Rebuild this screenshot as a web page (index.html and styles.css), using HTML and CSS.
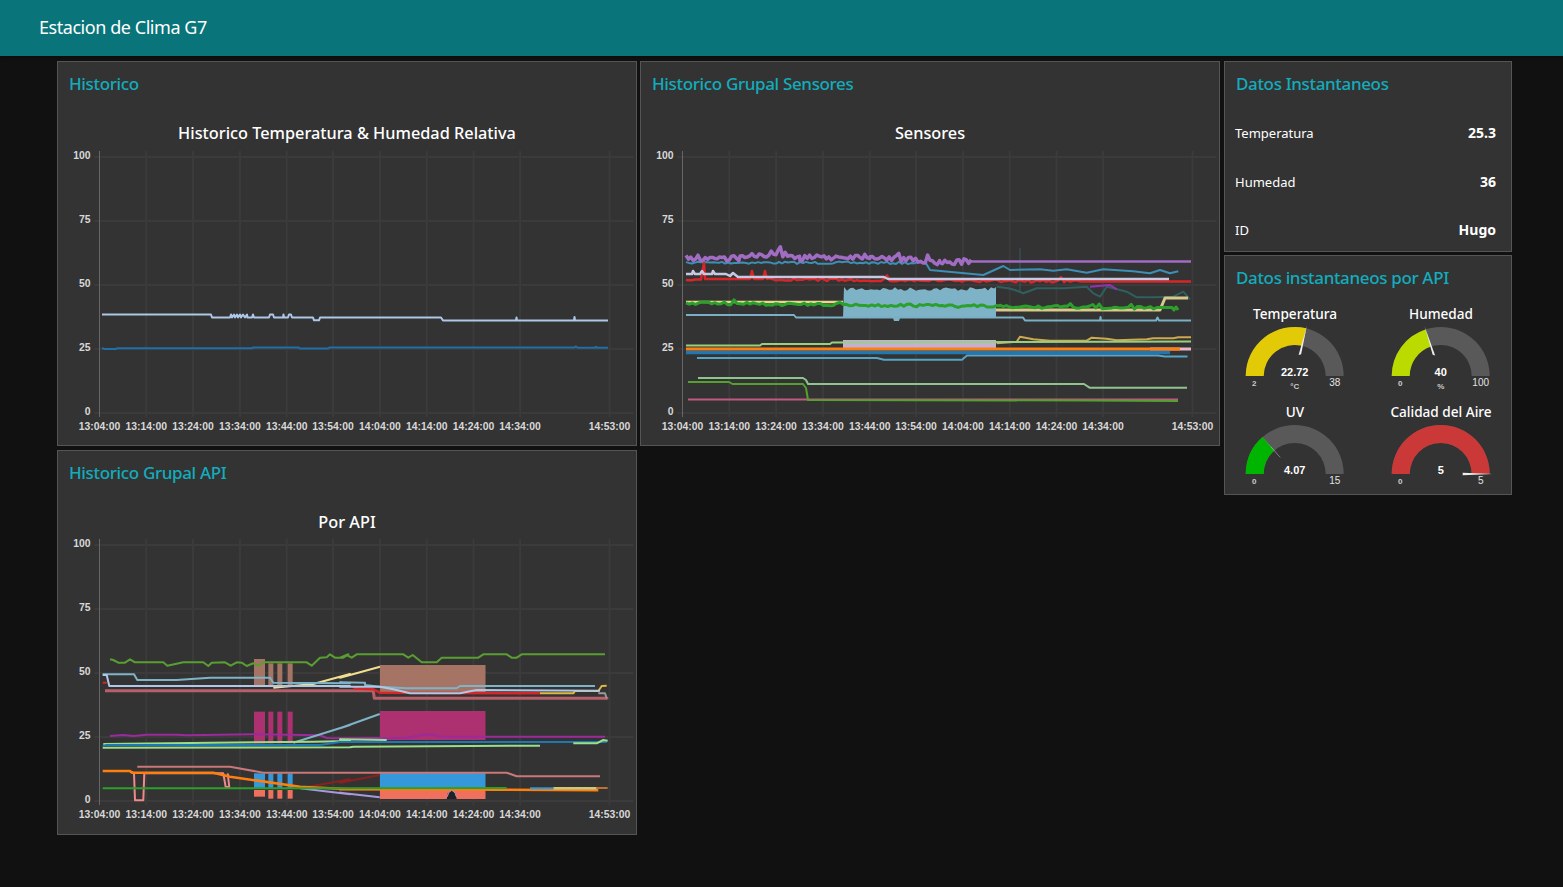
FILE: index.html
```html
<!DOCTYPE html>
<html lang="en">
<head>
    <meta charset="UTF-8">
    <meta name="viewport" content="width=device-width, initial-scale=1.0">
    <title>Estacion de Clima G7</title>
    <link rel="stylesheet" href="styles.css">
</head>
<body>

<header class="topbar">Estacion de Clima G7</header>

<main class="dashboard">
    <div class="column">
        <section class="card">
            <h2 class="card-title">Historico</h2>
            <div class="chart-title">Historico Temperatura &amp; Humedad Relativa</div>
            <svg id="chart_temp" class="chart" viewBox="58 145 578 300"></svg>
        </section>
        <section class="card">
            <h2 class="card-title">Historico Grupal API</h2>
            <div class="chart-title">Por API</div>
            <svg id="chart_api" class="chart" viewBox="58 534 578 300"></svg>
        </section>
    </div>

    <div class="column">
        <section class="card">
            <h2 class="card-title">Historico Grupal Sensores</h2>
            <div class="chart-title">Sensores</div>
            <svg id="chart_sensors" class="chart" viewBox="641 145 578 300"></svg>
        </section>
    </div>

    <div class="column column-side">
        <section class="card card-readings">
            <h2 class="card-title">Datos Instantaneos</h2>
            <div class="reading"><span>Temperatura</span><b>25.3</b></div>
            <div class="reading"><span>Humedad</span><b>36</b></div>
            <div class="reading"><span>ID</span><b>Hugo</b></div>
        </section>
        <section class="card card-gauges">
            <h2 class="card-title">Datos instantaneos por API</h2>
            <div class="gauge-grid">
                <div class="gauge">
                    <div class="gauge-title">Temperatura</div>
                    <svg class="gauge-svg" viewBox="0 0 140 78" data-value="22.72" data-min="2" data-max="38" data-unit="°C" data-color="#e2cb06"></svg>
                </div>
                <div class="gauge">
                    <div class="gauge-title">Humedad</div>
                    <svg class="gauge-svg" viewBox="0 0 140 78" data-value="40" data-min="0" data-max="100" data-unit="%" data-color="#bbdb00"></svg>
                </div>
                <div class="gauge">
                    <div class="gauge-title">UV</div>
                    <svg class="gauge-svg" viewBox="0 0 140 78" data-value="4.07" data-min="0" data-max="15" data-unit="" data-color="#00b500"></svg>
                </div>
                <div class="gauge">
                    <div class="gauge-title">Calidad del Aire</div>
                    <svg class="gauge-svg" viewBox="0 0 140 78" data-value="5" data-min="0" data-max="5" data-unit="" data-color="#ca3838"></svg>
                </div>
            </div>
        </section>
    </div>
</main>

<script src="app.js"></script>

</body>
</html>
```

FILE: styles.css
```css
/* page */
body {
    font-family: "Noto Sans", "Open Sans", sans-serif;
    background-color: #111;
    color: #fff;
    margin: 0;
    padding: 0;
    min-height: 100vh;
}

.topbar {
    height: 56px;
    line-height: 55px;
    padding-left: 39px;
    background-color: #097479;
    font-size: 18px;
    letter-spacing: -0.45px;
    box-shadow: 0 1px 3px rgba(0, 0, 0, 0.4);
}

/* columns */
.dashboard {
    display: flex;
    align-items: flex-start;
    gap: 3px;
    padding: 5px 0 0 57px;
}

.column {
    display: flex;
    flex-direction: column;
    gap: 4px;
    width: 580px;
}

.column-side {
    width: 288px;
    margin-left: 1px;
    gap: 3px;
}

/* cards */
.card {
    box-sizing: border-box;
    height: 385px;
    background-color: #333;
    border: 1px solid #555;
}

.card-readings {
    height: 191px;
}

.card-gauges {
    height: 240px;
}

.card-title {
    margin: 0;
    padding: 9px 11px 0;
    height: 47px;
    box-sizing: border-box;
    line-height: 25px;
    font-size: 17px;
    font-weight: 500;
    letter-spacing: -0.35px;
    color: #12acbc;
}

.chart-title {
    height: 24px;
    margin-top: 12px;
    line-height: 24px;
    text-align: center;
    font-size: 16.3px;
    font-weight: 500;
}

.chart {
    display: block;
    width: 578px;
    height: 300px;
}

.tick {
    font-family: "Liberation Sans", Arial, sans-serif;
    font-size: 10.4px;
    font-weight: bold;
    fill: #d8d8d8;
}

/* readings */
.reading {
    display: flex;
    justify-content: space-between;
    align-items: center;
    height: 48.5px;
    padding: 0 15px 0 10px;
    font-size: 13px;
}

.reading b {
    font-size: 14px;
    line-height: 16px;
}

/* gauges */
.gauge-grid {
    display: grid;
    grid-template-columns: 140px 140px;
    grid-auto-rows: 98px;
    column-gap: 6px;
}

.gauge-title {
    height: 20px;
    line-height: 22px;
    text-align: center;
    font-size: 13.6px;
    font-weight: 500;
}

.gauge-svg {
    display: block;
    width: 140px;
    height: 78px;
}

.gauge-value {
    font-family: "Liberation Sans", Arial, sans-serif;
    font-size: 11px;
    font-weight: bold;
    fill: #fff;
    text-anchor: middle;
}

.gauge-unit,
.gauge-min {
    font-family: "Liberation Sans", Arial, sans-serif;
    font-size: 8px;
    font-weight: bold;
    fill: #ccc;
    text-anchor: middle;
}

.gauge-max {
    font-family: "Liberation Sans", Arial, sans-serif;
    font-size: 10px;
    fill: #e4e4e4;
    text-anchor: middle;
}
```

FILE: app.js
```js
const NS = "http://www.w3.org/2000/svg";

function el(parent, name, attrs, text) {
    const node = document.createElementNS(NS, name);
    for (const key in attrs) node.setAttribute(key, attrs[key]);
    if (text !== undefined) node.textContent = text;
    parent.appendChild(node);
    return node;
}

// points read off at an offset and 3x scale -> page coordinates
function z(ox, oy, flat) {
    const out = [];
    for (let i = 0; i < flat.length; i += 2) out.push([ox + flat[i] / 3, oy + flat[i + 1] / 3]);
    return out;
}

function px(pts) {
    return pts.map(p => p[0].toFixed(1) + "," + p[1].toFixed(1)).join(" ");
}

let seed = 7;
function rnd() {
    seed = (seed * 16807) % 2147483647;
    return seed / 2147483647;
}

// step line through the points with seeded jitter
function noisy(pts, amp, step, spike) {
    const out = [];
    for (let i = 0; i < pts.length - 1; i++) {
        const a = pts[i], b = pts[i + 1];
        for (let x = a[0]; x < b[0]; x += step) {
            const y = a[1] + (b[1] - a[1]) * (x - a[0]) / (b[0] - a[0]);
            let d = (rnd() - 0.5) * 2 * amp;
            if (spike && rnd() < 0.06) d -= spike * rnd();
            out.push([x, y + d]);
        }
    }
    return out;
}

function drawAxes(svg, x0, dy, last) {
    const gridX = [0, 46.8, 93.6, 140.4, 187.2, 233.6, 280.4, 327.2, 374, 420.6, 510];
    const labels = ["13:04:00", "13:14:00", "13:24:00", "13:34:00", "13:44:00", "13:54:00", "14:04:00", "14:14:00", "14:24:00", "14:34:00", last];
    const values = [100, 75, 50, 25, 0];
    values.forEach((v, i) => {
        const y = 157 + i * 64 + dy;
        el(svg, "line", { x1: x0 - 5, x2: x0 + 534, y1: y, y2: y, stroke: "#3b3b3b", "stroke-width": 2 });
        el(svg, "text", { class: "tick", x: x0 - 9, y: y + 2, "text-anchor": "end" }, v);
    });
    gridX.forEach((g, i) => {
        const x = x0 + g;
        el(svg, "line", { x1: x, x2: x, y1: 151 + dy, y2: 417 + dy, stroke: i ? "#3b3b3b" : "#666", "stroke-width": i ? 2 : 1 });
        el(svg, "text", { class: "tick", x: x, y: 430 + dy, "text-anchor": "middle" }, labels[i]);
    });
}

function line(svg, color, width, pts) {
    el(svg, "polyline", { points: px(pts), fill: "none", stroke: color, "stroke-width": width, "stroke-linejoin": "round" });
}

function fill(svg, color, pts) {
    el(svg, "polygon", { points: px(pts), fill: color });
}

function rect(svg, color, x1, y1, x2, y2) {
    el(svg, "rect", { x: x1, y: y1, width: x2 - x1, height: y2 - y1, fill: color });
}

function drawTemp(svg) {
    drawAxes(svg, 99.5, 0, "14:53:00");
    line(svg, "#1f6fa8", 2, [[102, 347.8], [104, 349], [116, 349], [117, 348.3], [252, 348.3], [253, 347.6], [299, 347.6], [300, 348.6], [328, 348.6], [329, 347.6], [574, 347.6], [576, 346.5], [578, 347.8], [595, 347.8], [596, 346.8], [598, 347.8], [608, 347.8]]);
    line(svg, "#aec7e8", 2, [[102, 314.5], [211, 314.5], [212, 317.5], [230, 317.5], [231, 314.5], [232, 317.5], [234, 314.5], [235, 317.5], [237, 314.5], [238, 317.5], [240, 314.5], [241, 317.5], [243, 314.5], [245, 317.5], [247, 314.5], [247.5, 317.5], [252, 317.5], [253, 314.5], [254, 317.5], [269, 317.5], [270, 314.5], [273, 314.5], [274, 317.5], [283, 317.5], [283.5, 314.5], [284, 317.5], [288, 317.5], [289, 314.5], [291, 314.5], [292, 317.5], [313, 317.5], [314, 320.3], [319, 320.3], [320, 317.5], [441, 317.5], [443, 320.5], [516, 320.5], [516.5, 317.5], [517, 320.5], [574, 320.5], [574.5, 317], [575, 320.5], [608, 320.5]]);
}

function drawSensors(svg) {
    drawAxes(svg, 682.5, 0, "14:53:00");

    // block under the noisy lines
    const top = noisy([[844, 289], [996, 289]], 2, 3, 0).map(p => [p[0], p[1]]);
    fill(svg, "#7eb2c6", [[843, 318]].concat(top, [[996, 287], [996, 318], [900, 318], [899, 321], [894, 321], [893, 318]]));
    rect(svg, "#c5b0d5", 843, 340, 996, 348);
    line(svg, "#335f5f", 1, [[1020, 248], [1020, 292]]);

    line(svg, "#3d8fb5", 2, noisy([[686, 262.5], [928, 263]], 1.2, 3).concat(z(680, 240, [750, 90]), z(940, 240, [130, 105, 190, 78, 210, 90, 300, 88, 340, 92, 380, 88, 440, 98, 490, 88, 580, 94, 630, 100, 660, 90, 690, 100, 715, 94])));
    line(svg, "#a06cc4", 3.5, noisy([[686, 258], [740, 258], [778, 253], [800, 258], [870, 256], [940, 263], [972, 261]], 3, 2.4, 7));
    line(svg, "#a06cc4", 2.5, [[970, 261.5], [1191, 261.5]]);

    line(svg, "#2f5f5f", 2, z(940, 240, [170, 140, 205, 145, 225, 150, 250, 160, 290, 145, 370, 145, 440, 140, 460, 160, 480, 170, 500, 140, 520, 145, 560, 155, 590, 172, 640, 172, 700, 170, 730, 155, 750, 178]));
    line(svg, "#9a2fb0", 2, z(940, 240, [450, 140, 510, 135, 530, 148]));

    line(svg, "#d62728", 2.5, noisy([[686, 280.5], [704, 279.5]], 0.6, 3, 0).concat(
        [[704, 263], [705, 279], [750, 279], [752, 271], [754, 279], [763, 279], [765, 271], [767, 279]],
        noisy([[767, 279.5], [1085, 281.5]], 1.4, 3, 7),
        [[1191, 281.5]]));
    line(svg, "#c8c8e4", 2.5, [[686, 274], [692, 274], [693, 271], [695, 274], [700, 274], [702, 271], [704, 274], [712, 274], [713, 271], [715, 274], [726, 274], [730, 276], [733, 273], [738, 277], [884, 277], [888, 279], [1169, 279]]);

    line(svg, "#e8d88a", 2.5, [[686, 302], [843, 302]]);
    line(svg, "#d8c98a", 3, [[996, 310], [1160, 310], [1165, 298], [1188, 298]]);
    line(svg, "#2ca02c", 3, noisy([[686, 303], [843, 305], [1000, 306.5], [1160, 308]], 1.4, 3.2, 3).concat([[1172, 307.5], [1174, 310], [1176, 307], [1178, 310]]));

    line(svg, "#79b0c6", 2, [[686, 315], [794, 315], [796, 317.5], [843, 317.5], [996, 317.5], [1023, 317.5], [1025, 320.5], [1100, 320.5], [1100.5, 317], [1101, 320.5], [1156, 320.5], [1157.5, 317.5], [1159, 320.5], [1191, 320.5]]);

    line(svg, "#d0a850", 2, z(940, 240, [170, 310, 230, 305, 240, 290, 280, 298, 330, 302, 440, 302, 455, 293, 500, 296, 530, 301, 620, 298, 640, 295, 700, 295, 715, 292, 753, 292]));
    line(svg, "#98d080", 2, [[686, 345.5], [760, 345.5], [762, 344], [830, 344], [832, 342.5], [1191, 341.5]]);
    line(svg, "#e8b8c8", 3, [[1150, 349], [1191, 349]]);
    line(svg, "#1f77b4", 3.5, [[686, 352.5], [1170, 352.5]]);
    line(svg, "#ff7f0e", 3, [[686, 349], [1180, 349]]);
    line(svg, "#56a5c8", 2, [[697, 358], [877, 358], [884, 359.7], [962, 359.7], [967, 355.5], [1158, 355.5], [1165, 356.5], [1187.5, 356.5]]);

    line(svg, "#c05a80", 2, [[688, 399.5], [1178, 399.5]]);
    line(svg, "#8fc48f", 2, [[698, 378], [803, 378], [806, 380], [808, 384], [1084, 384], [1089.5, 387.7], [1187, 387.7]]);
    line(svg, "#55a030", 2, [[688, 382], [729, 382], [732.5, 384], [803, 384], [806, 388], [808, 400], [1087, 400.5], [1178, 401]]);
}

function drawApi(svg) {
    drawAxes(svg, 99.5, 388, "14:53:00");
    const a = f => z(60, 640, f);
    const b = f => z(340, 640, f);
    const blocks = [[582, 615], [625, 640], [652, 667], [683, 698]];

    // fills
    blocks.forEach((k, i) => {
        rect(svg, "#a57464", 60 + k[0] / 3, 640 + (i ? 70 : 57) / 3, 60 + k[1] / 3, 640 + 138 / 3);
        rect(svg, "#ad3070", 60 + k[0] / 3, 640 + 215 / 3, 60 + k[1] / 3, 640 + 310 / 3);
        rect(svg, "#3498db", 60 + k[0] / 3, 640 + 400 / 3, 60 + k[1] / 3, 640 + 445 / 3);
        rect(svg, "#f07060", 60 + k[0] / 3, 640 + 450 / 3, 60 + k[1] / 3, 640 + (i ? 476 : 470) / 3);
    });
    rect(svg, "#a57464", 380, 665, 485.5, 692);
    rect(svg, "#ad3070", 380, 711, 485.5, 740);
    rect(svg, "#3498db", 380, 773, 485.5, 789);
    rect(svg, "#f07060", 380, 789, 485.5, 799);
    fill(svg, "#222", b([320, 477, 324, 460, 335, 450, 346, 460, 350, 477]));
    line(svg, "#a898e0", 1, b([322, 470, 326, 458, 335, 451, 345, 458, 349, 470]));

    // upper group
    line(svg, "#5a9e32", 2, a([150, 58, 160, 60, 175, 68, 195, 68, 210, 58, 225, 67, 310, 67, 322, 77, 370, 67, 430, 67, 445, 78, 455, 68, 495, 67, 512, 77, 530, 67, 545, 68, 560, 78, 580, 70, 595, 77, 610, 67, 740, 67, 755, 77, 780, 53, 800, 52, 810, 43, 825, 53, 850, 53, 865, 43]).concat(b([0, 53, 20, 45, 35, 53, 50, 43, 190, 43, 205, 53, 218, 45, 245, 67, 290, 67, 305, 53, 415, 53, 430, 43, 500, 43, 515, 53, 530, 53, 545, 43, 795, 43])));
    line(svg, "#f0e090", 2, a([640, 143, 760, 132, 870, 102]).concat(b([0, 113, 120, 80])));
    line(svg, "#b5606a", 3, a([135, 152, 870, 152]).concat(b([100, 152, 103, 175, 800, 175, 803, 178])));
    line(svg, "#d62728", 2.5, b([40, 145, 100, 148, 120, 158, 600, 160]));
    line(svg, "#d62728", 2, a([128, 128, 140, 128]));
    line(svg, "#e0b840", 2, b([600, 160, 700, 160, 705, 153, 775, 153, 785, 138, 800, 137]));
    line(svg, "#999", 2, b([775, 160, 795, 160, 800, 175]));
    line(svg, "#7fb3c8", 2, a([128, 103, 222, 103, 232, 120, 350, 120, 450, 113, 630, 113, 640, 128, 870, 130]).concat(b([0, 127, 75, 128, 75, 135, 120, 140, 200, 145, 350, 145, 360, 138, 765, 138])));
    line(svg, "#b0c8e8", 2, a([128, 105, 140, 105, 148, 138, 870, 138]).concat(b([0, 140, 120, 140, 160, 148, 210, 160, 360, 160, 410, 150, 780, 152])));

    // middle group
    line(svg, "#9b2a9b", 2, a([150, 288, 190, 285, 220, 288, 260, 284, 350, 284, 380, 286, 580, 283, 780, 286, 800, 294, 870, 295]).concat(b([0, 295, 200, 293, 260, 283, 310, 290, 795, 290])));
    line(svg, "#7fb3c8", 2, a([700, 308, 870, 255]).concat(b([0, 265, 119, 222])));
    line(svg, "#98df8a", 2, a([130, 312, 760, 305, 870, 303]).concat(b([0, 298, 140, 300])));
    line(svg, "#98df8a", 2, a([128, 323, 870, 322]).concat(b([40, 320, 600, 317])));
    line(svg, "#1f77b4", 2, a([128, 318, 140, 315, 780, 315]).concat(b([0, 306, 800, 306])));
    line(svg, "#98df8a", 2, b([700, 310, 770, 310, 790, 300, 803, 302]));

    // lower group
    line(svg, "#c87878", 2, a([232, 380, 510, 380, 610, 398, 870, 398]).concat(b([500, 398, 530, 409, 780, 409])));
    line(svg, "#8b2020", 2, a([745, 440, 870, 418]).concat(b([0, 428, 119, 405])));
    line(svg, "#a898e0", 2, a([720, 445, 870, 463]).concat(b([0, 458, 119, 472])));
    line(svg, "#f08a8a", 2, a([215, 395, 222, 400, 225, 481, 250, 481, 253, 400, 490, 400, 497, 441, 508, 441, 503, 400]));
    line(svg, "#ff7f0e", 2.5, a([128, 393, 210, 393, 215, 398, 460, 398, 510, 410, 720, 440, 870, 448]).concat(b([0, 448, 490, 449, 775, 451])));
    line(svg, "#c8c880", 2.5, b([640, 445, 770, 445]));
    line(svg, "#3498db", 2, b([570, 445, 640, 445]));
    line(svg, "#2ca02c", 2, a([128, 445, 870, 445]).concat(b([0, 445, 500, 444])));
    line(svg, "#b87333", 2, b([770, 444, 803, 444]));
}

function drawGauge(svg) {
    const value = parseFloat(svg.dataset.value);
    const min = parseFloat(svg.dataset.min);
    const max = parseFloat(svg.dataset.max);
    const cx = 69.7, cy = 53, ro = 49, ri = 31;
    const angle = Math.PI * (value - min) / (max - min);
    const ex = Math.cos(angle), ey = Math.sin(angle);

    el(svg, "path", { d: `M${cx - ro},${cy} A${ro},${ro} 0 0 1 ${cx + ro},${cy} L${cx + ri},${cy} A${ri},${ri} 0 0 0 ${cx - ri},${cy} Z`, fill: "#595959" });
    el(svg, "path", { d: `M${cx - ro},${cy} A${ro},${ro} 0 0 1 ${cx - ro * ex},${cy - ro * ey} L${cx - ri * ex},${cy - ri * ey} A${ri},${ri} 0 0 0 ${cx - ri},${cy} Z`, fill: svg.dataset.color });

    // needle tapers from the hub end to a hair past the rim
    const nx = -ey * 1.3, ny = ex * 1.3;
    const x1 = cx - 22 * ex, y1 = cy - 22 * ey, x2 = cx - 52 * ex, y2 = cy - 52 * ey;
    el(svg, "polygon", { points: `${x1 + nx},${y1 - ny} ${x1 - nx},${y1 + ny} ${x2},${y2}`, fill: "#eee" });

    el(svg, "text", { class: "gauge-value", x: cx, y: cy }, svg.dataset.value);
    el(svg, "text", { class: "gauge-unit", x: cx, y: cy + 13 }, svg.dataset.unit);
    el(svg, "text", { class: "gauge-min", x: cx - 40.5, y: cy + 10 }, svg.dataset.min);
    el(svg, "text", { class: "gauge-max", x: cx + 40, y: cy + 10 }, svg.dataset.max);
}

drawTemp(document.getElementById("chart_temp"));
drawSensors(document.getElementById("chart_sensors"));
drawApi(document.getElementById("chart_api"));
document.querySelectorAll(".gauge-svg").forEach(drawGauge);
```
